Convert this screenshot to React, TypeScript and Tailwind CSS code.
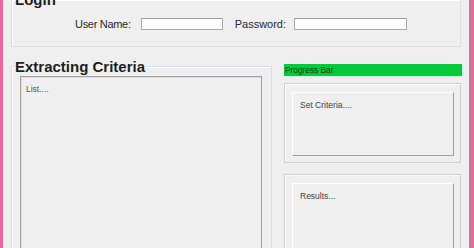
import React from "react";

export default function App() {
  return (
    <div className="flex h-[248px] w-[474px] overflow-hidden bg-[#efefef] font-['Liberation_Sans',Arial,sans-serif]">
      <div className="w-[3px] shrink-0 bg-[#e26b98]" />
      <div className="flex w-[466px] shrink-0 flex-col pl-[8px]">
        <fieldset className="-mt-[8px] h-[55px] w-[450px] shrink-0 border border-[#d5dfe5] shadow-[inset_1px_1px_0_#ffffff]">
          <legend className="ml-[3px] text-[15px] leading-[15px] font-bold text-[#1e1e1e]">Login</legend>
          <div className="flex items-center pl-[63px] pt-[11px] text-[11px] leading-[12px] text-[#2a2a2a]">
            <span className="tracking-[-0.3px]">User Name:</span>
            <input
              type="text"
              className="ml-[10px] h-[12px] w-[82px] border border-[#a9a9a9] border-t-[#9c9c9c] bg-white p-0"
            />
            <span className="ml-[12px]">Password:</span>
            <input
              type="password"
              className="ml-[8px] h-[12px] w-[113px] border border-[#a9a9a9] border-t-[#9c9c9c] bg-white p-0"
            />
          </div>
        </fieldset>
        <div className="mt-[12px] flex gap-[12px]">
          <fieldset className="h-[220px] w-[261px] shrink-0 border border-[#d5dfe5] shadow-[inset_1px_1px_0_#ffffff]">
            <legend className="ml-[3px] text-[15px] leading-[15px] font-bold text-[#1e1e1e]">Extracting Criteria</legend>
            <div className="ml-[8px] mt-[2px] h-[200px] w-[242px] border border-[#a0a0a0] pl-[5px] pt-[7px] text-[8.5px] leading-[10px] text-[#555555] shadow-[inset_1px_1px_0_#dcdcdc]">
              List....
            </div>
          </fieldset>
          <div className="mt-[5px] flex w-[178px] shrink-0 flex-col">
            <div className="h-[12px] bg-[#00cc3a] pl-[1px] text-[8.3px] leading-[12px] text-[#0d3d14]">Progress Bar</div>
            <div className="mt-[7px] h-[80px] w-[177px] border border-[#d0d0d0] pl-[7px] pt-[8px] shadow-[inset_1px_1px_0_#ffffff]">
              <div className="h-[64px] w-[162px] border border-b-[#a0a0a0] border-l-white border-r-[#a0a0a0] border-t-white pl-[7px] pt-[7px] text-[8.5px] leading-[10px] text-[#444444]">
                Set Criteria....
              </div>
            </div>
            <div className="mt-[11px] h-[100px] w-[177px] border border-[#d0d0d0] pl-[7px] pt-[8px] shadow-[inset_1px_1px_0_#ffffff]">
              <div className="h-[90px] w-[162px] border border-b-[#a0a0a0] border-l-white border-r-[#a0a0a0] border-t-white pl-[7px] pt-[7px] text-[8.5px] leading-[10px] text-[#444444]">
                Results...
              </div>
            </div>
          </div>
        </div>
      </div>
      <div className="w-[5px] shrink-0 bg-[#e26b98]" />
    </div>
  );
}
